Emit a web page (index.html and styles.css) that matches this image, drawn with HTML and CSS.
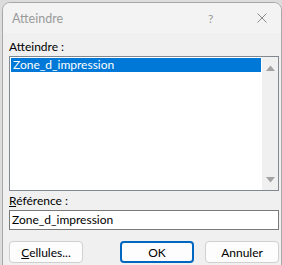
FILE: index.html
```html
<!DOCTYPE html>
<html>
<head>
    <title>Atteindre</title>
    <link rel="stylesheet" href="styles.css">
</head>
<body>
    <div class="window">
        <div class="titlebar">
            <span class="title">Atteindre</span>
            <span class="help">?</span>
            <span class="close">
                <svg width="10" height="10" viewBox="0 0 10 10">
                    <path d="M0.5 0.5 L9.5 9.5 M9.5 0.5 L0.5 9.5" stroke="#8a8a8a" stroke-width="1" fill="none"/>
                </svg>
            </span>
        </div>

        <div class="content">
            <div class="label">Atteindre :</div>
            <div class="listbox">
                <div class="items">
                    <div class="item selected">Zone_d_impression</div>
                </div>
                <div class="scrollbar">
                    <svg width="9" height="6" viewBox="0 0 9 6"><path d="M0 6 L4.5 0.5 L9 6 Z" fill="#a3a3a3"/></svg>
                    <svg width="9" height="6" viewBox="0 0 9 6"><path d="M0 0 L4.5 5.5 L9 0 Z" fill="#a3a3a3"/></svg>
                </div>
            </div>

            <div class="label ref-label"><u>R</u>éférence :</div>
            <div class="input">Zone_d_impression</div>

            <div class="buttons">
                <button class="button"><u>C</u>ellules...</button>
                <span class="spacer"></span>
                <button class="button default">OK</button>
                <button class="button">Annuler</button>
            </div>
        </div>
    </div>
</body>
</html>
```

FILE: styles.css
```css
body {
    margin: 0;
    background: #dcdcdc;
    font-family: Lato, "Noto Sans", sans-serif;
    font-size: 12px;
    overflow: hidden;
}
.window {
    margin: 2px 0 0 2px;
    width: 278px;
    height: 270px;
    border: 1px solid #a8a8a8;
    border-radius: 8px 8px 0 0;
    background: #f0f0f0;
    overflow: hidden;
}
.titlebar {
    height: 30px;
    display: flex;
    align-items: center;
    background: #f3f3f3;
    padding-left: 9px;
}
.title {
    color: #9a9a9a;
    flex: 1;
    font-size: 12.5px;
}
.help {
    color: #9a9a9a;
    width: 14px;
    margin-right: 35px;
}
.close {
    width: 10px;
    height: 10px;
    margin-right: 14px;
    display: flex;
}
.content {
    padding: 0 2px 0 6px;
}
.label {
    color: #000;
    line-height: 16px;
    margin-top: 6px;
    margin-bottom: 1px;
}
.listbox {
    height: 133px;
    border: 1px solid #828790;
    background: #fff;
    display: flex;
}
.items {
    flex: 1;
    padding: 1px 1px 0 1px;
}
.item {
    line-height: 14px;
    height: 14px;
    padding-left: 2px;
}
.item.selected {
    background: #0078d7;
    color: #fff;
}
.scrollbar {
    width: 16px;
    background: #f0f0f0;
    display: flex;
    flex-direction: column;
    justify-content: space-between;
    align-items: center;
    padding: 8px 0 7px;
}
.ref-label {
    margin-top: 2px;
    margin-bottom: 1px;
}
.input {
    height: 18px;
    line-height: 18px;
    border: 1px solid #7a7a7a;
    background: #fff;
    padding-left: 2px;
}
.buttons {
    display: flex;
    margin-top: 11px;
    gap: 11px;
}
.spacer {
    flex: 1;
}
.button {
    width: 74px;
    height: 22px;
    font-family: inherit;
    font-size: 12px;
    background: #fdfdfd;
    border: 1px solid #d0d0d0;
    border-radius: 4px;
    padding: 0;
    color: #000;
}
.button.default {
    border: 2px solid #0067c0;
}
```
